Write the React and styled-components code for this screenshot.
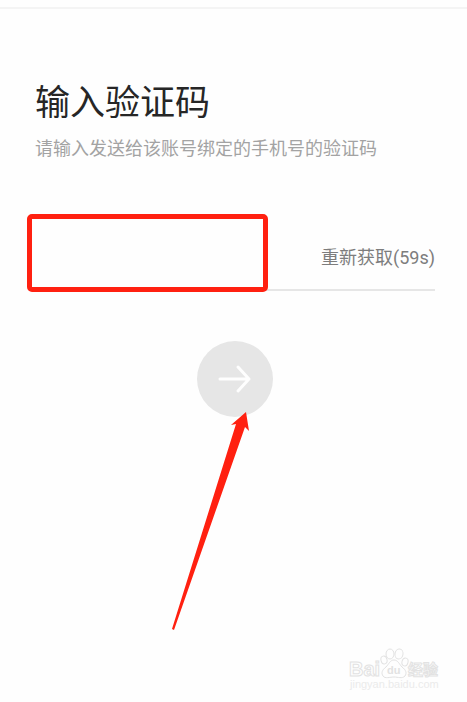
import React, { useState } from 'react';
import styled, { createGlobalStyle } from 'styled-components';

const GlobalStyle = createGlobalStyle`
  * {
    box-sizing: border-box;
  }
  body {
    margin: 0;
    background: #fefefe;
    font-family: Roboto, "Noto Sans CJK SC", sans-serif;
  }
`;

const Page = styled.div`
  display: flex;
  flex-direction: column;
  min-height: 100vh;
`;

const TopBar = styled.header`
  height: 9px;
  border-bottom: 2px solid #f4f4f4;
`;

const Content = styled.main`
  padding: 71px 32px 0 35px;
`;

const Title = styled.h1`
  margin: 0;
  color: #262626;
  font-size: 35px;
  font-weight: 400;
  line-height: 48px;
`;

const Hint = styled.label`
  display: block;
  margin-top: 9px;
  color: #a3a3a3;
  font-size: 18px;
  font-weight: 400;
  line-height: 24px;
`;

const CodeRow = styled.div`
  position: relative;
  display: flex;
  align-items: center;
  height: 72px;
  margin-top: 58px;
  padding-top: 8px;
  border-bottom: 2px solid #e6e6e6;
`;

const CodeInput = styled.input`
  flex: 1;
  min-width: 0;
  height: 48px;
  padding: 0;
  border: 0;
  outline: 0;
  background: transparent;
  color: #262626;
  font-family: inherit;
  font-size: 18px;
`;

const ResendButton = styled.button`
  padding: 0;
  border: 0;
  background: transparent;
  color: #7d7d7d;
  font-family: inherit;
  font-size: 18px;
  line-height: 24px;
`;

const Highlight = styled.div`
  position: absolute;
  top: -5px;
  bottom: -3px;
  left: -8px;
  width: 241px;
  border: 5px solid #ff2010;
  border-radius: 5px;
  pointer-events: none;
`;

const SubmitRow = styled.div`
  display: flex;
  justify-content: center;
  margin-top: 50px;
`;

const SubmitWrapper = styled.div`
  position: relative;
`;

const SubmitButton = styled.button`
  display: flex;
  align-items: center;
  justify-content: center;
  width: 76px;
  height: 76px;
  padding: 0;
  border: 0;
  border-radius: 50%;
  background: #e6e6e6;
`;

const Pointer = styled.svg`
  position: absolute;
  top: 70px;
  left: -26px;
  pointer-events: none;
`;

const Footer = styled.footer`
  display: flex;
  justify-content: flex-end;
  margin-top: auto;
  padding: 0 26px 8px 0;
`;

const ArrowIcon = () => (
  <svg width="34" height="30" viewBox="0 0 34 30" fill="none" stroke="#fefefe" strokeWidth="3" strokeLinecap="round" strokeLinejoin="round" aria-hidden="true">
    <path d="M2 15H31M20 3L31 15L20 27" />
  </svg>
);

const Watermark = () => (
  <svg width="94" height="48" viewBox="0 0 94 48" fill="#fefefe" stroke="#e2e2e2" strokeWidth="1">
    <ellipse cx="37" cy="14" rx="3" ry="4" transform="rotate(-15 37 14)" />
    <ellipse cx="43" cy="8" rx="4" ry="5" />
    <ellipse cx="52" cy="8" rx="4" ry="5" transform="rotate(10 52 8)" />
    <ellipse cx="58" cy="16" rx="3" ry="4" transform="rotate(15 58 16)" />
    <path d="M47 14C43 14 42 18 39 21C35 24 34 27 36 30C38 33 43 31 47 31C51 31 55 33 58 30C60 27 59 24 55 21C52 18 51 14 47 14Z" />
    <text x="2" y="30" fontFamily="Liberation Sans, sans-serif" fontSize="20" fontWeight="700">Bai</text>
    <text x="40" y="28" fontFamily="Liberation Sans, sans-serif" fontSize="11" fontWeight="700" fill="#e2e2e2" stroke="none">du</text>
    <text x="61" y="29" fontFamily="Noto Sans CJK SC, sans-serif" fontSize="15" fontWeight="700">经验</text>
    <text x="3" y="42" fontFamily="Liberation Sans, sans-serif" fontSize="11" fill="#ebebeb" stroke="none">jingyan.baidu.com</text>
  </svg>
);

export default () => {
  const [code, setCode] = useState('');

  return (
    <>
      <GlobalStyle />
      <Page>
        <TopBar />
        <Content>
          <Title>输入验证码</Title>
          <Hint htmlFor="code">请输入发送给该账号绑定的手机号的验证码</Hint>
          <CodeRow>
            <CodeInput
              id="code"
              inputMode="numeric"
              autoComplete="one-time-code"
              value={code}
              onChange={e => setCode(e.target.value)}
            />
            <ResendButton type="button">重新获取(59s)</ResendButton>
            <Highlight />
          </CodeRow>
          <SubmitRow>
            <SubmitWrapper>
              <SubmitButton type="button" aria-label="下一步">
                <ArrowIcon />
              </SubmitButton>
              <Pointer width="80" height="221" viewBox="0 0 80 221" fill="#ff2010" aria-hidden="true">
                <path d="M75 1L78 20L74 16L3 219L1 218L65 13L60 14Z" />
              </Pointer>
            </SubmitWrapper>
          </SubmitRow>
        </Content>
        <Footer>
          <Watermark />
        </Footer>
      </Page>
    </>
  );
};
